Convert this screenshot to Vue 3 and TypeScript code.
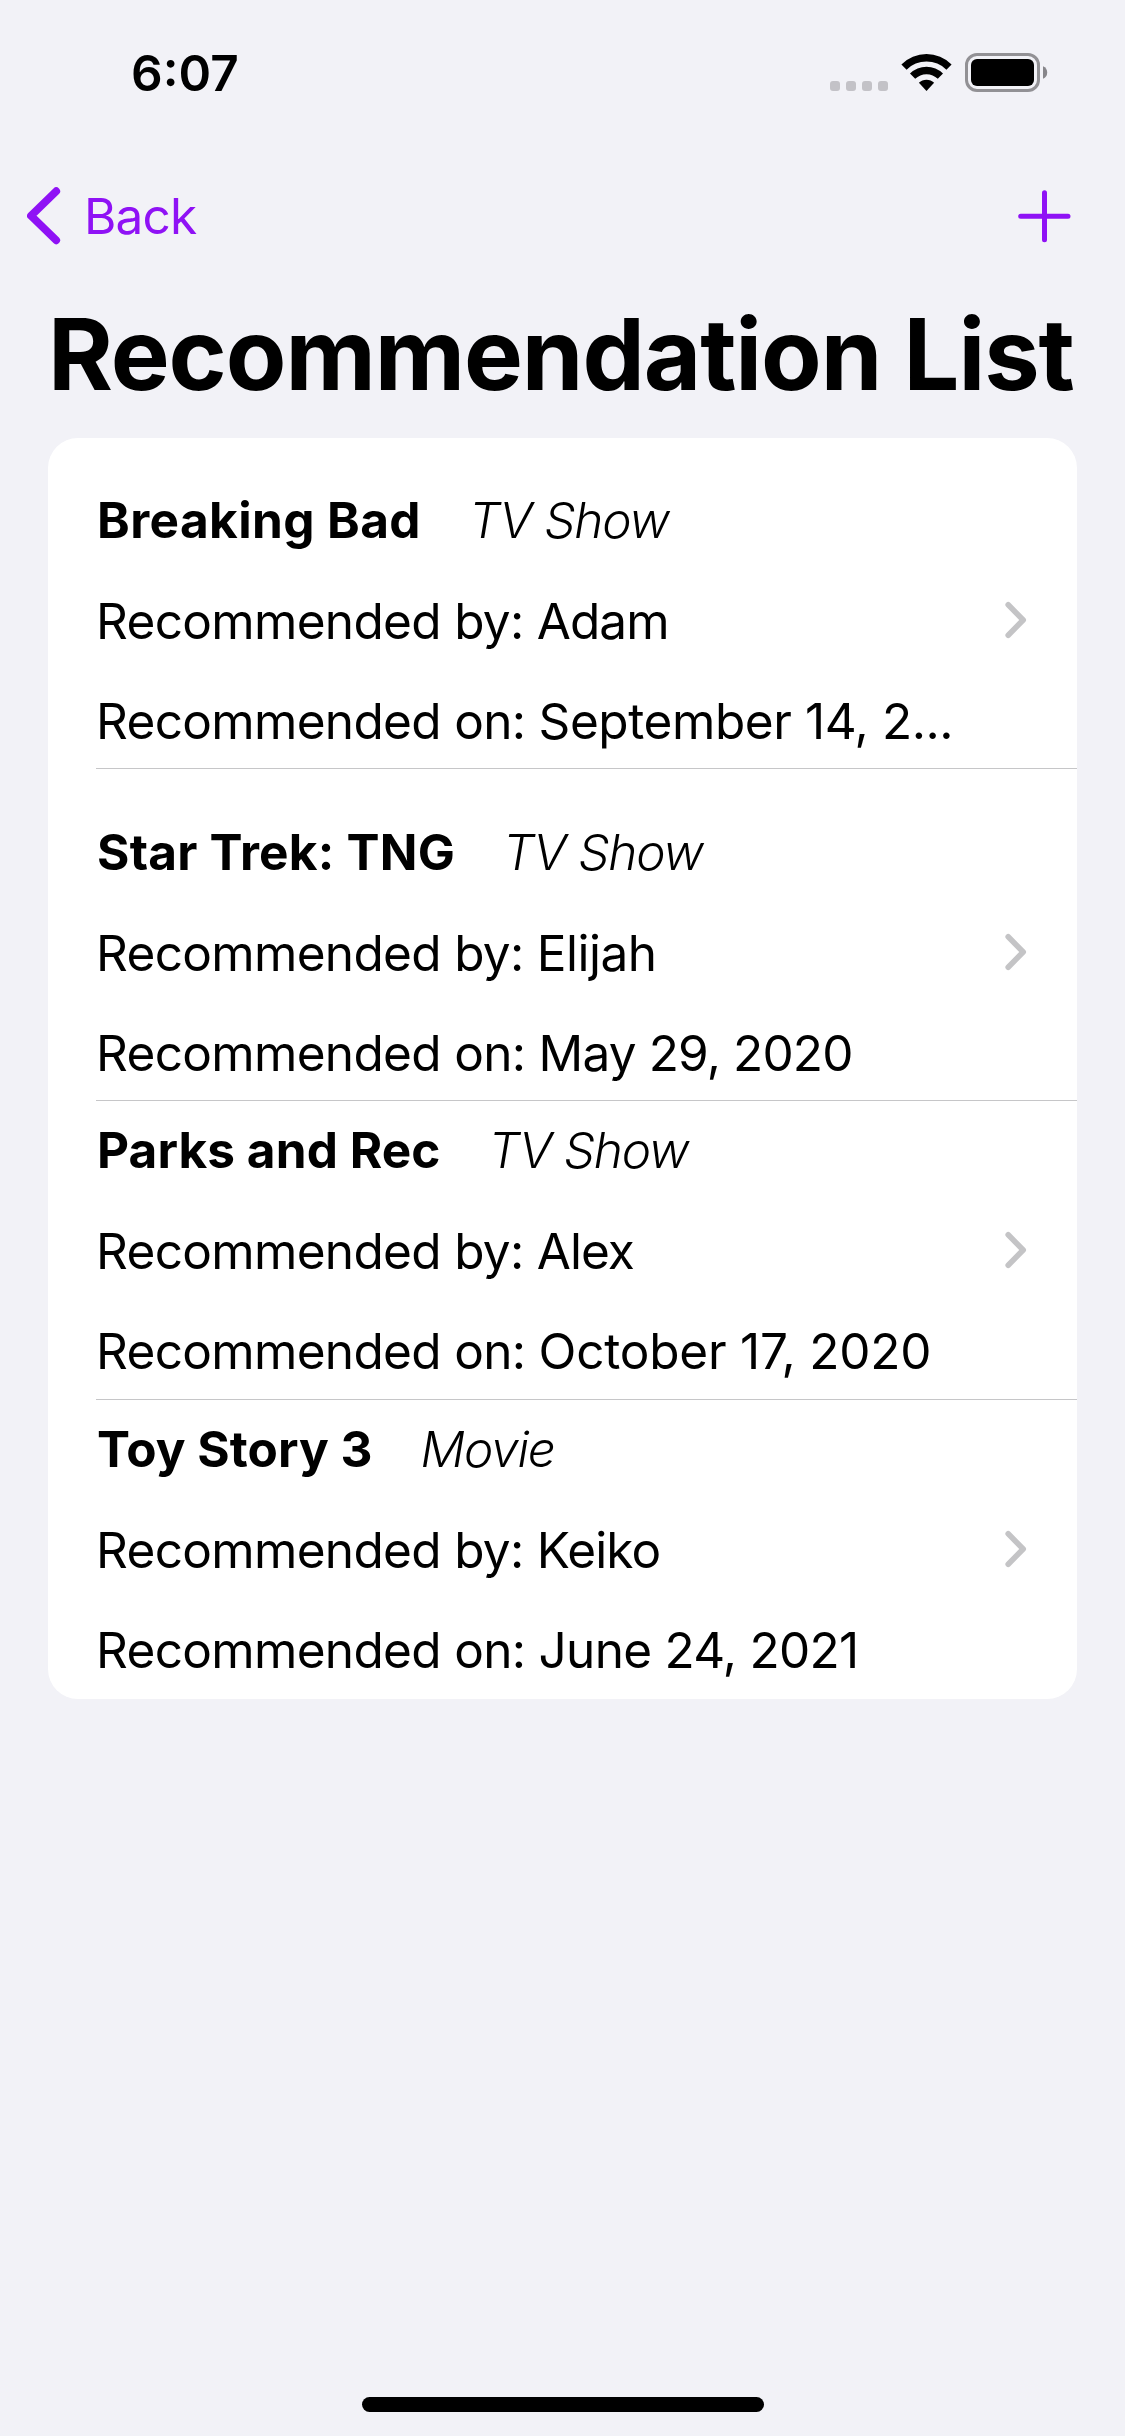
<script setup lang="ts">
interface Recommendation {
  title: string
  kind: string
  by: string
  on: string
  topInset: number
  bottomInset: number
  // letter-spacing in px for each run of text
  titleTracking: number
  kindTracking: number
  byTracking: number
  onTracking: number
}

const items: Recommendation[] = [
  { title: 'Breaking Bad', kind: 'TV Show', by: 'Adam', on: 'September 14, 2...', topInset: 52, bottomInset: 17, titleTracking: 0.41, kindTracking: -1.2, byTracking: -0.95, onTracking: -0.42 },
  { title: 'Star Trek: TNG', kind: 'TV Show', by: 'Elijah', on: 'May 29, 2020', topInset: 53, bottomInset: 17, titleTracking: 0.22, kindTracking: -1.2, byTracking: -0.5, onTracking: -0.85 },
  { title: 'Parks and Rec', kind: 'TV Show', by: 'Alex', on: 'October 17, 2020', topInset: 19, bottomInset: 18, titleTracking: 0.1, kindTracking: -1.2, byTracking: -1, onTracking: -0.22 },
  { title: 'Toy Story 3', kind: 'Movie', by: 'Keiko', on: 'June 24, 2021', topInset: 19, bottomInset: 19, titleTracking: 0.05, kindTracking: -1.2, byTracking: -0.9, onTracking: -0.72 },
]
</script>

<template>
  <div class="screen">
    <header class="status">
      <span class="time">6:07</span>
      <div class="indicators">
        <div class="cellular"><i></i><i></i><i></i><i></i></div>
        <svg class="wifi" width="52" height="40" viewBox="900 53 52 40">
          <path d="M901.4 64.5A35.5 35.5 0 0 1 951.6 64.5L946.4 69.7A28.2 28.2 0 0 0 906.6 69.7Z" />
          <path d="M910 73.6A23.4 23.4 0 0 1 943 73.6L937.8 78.8A16 16 0 0 0 915.2 78.8Z" />
          <path d="M918.9 82.8A10.8 10.8 0 0 1 934.1 82.8L926.5 90.9Z" />
        </svg>
        <svg class="battery" width="84" height="40" viewBox="964 52 84 40">
          <rect x="966.5" y="54.5" width="72" height="36" rx="10.5" fill="none" stroke="#929195" stroke-width="3" />
          <rect x="971" y="59" width="63" height="27" rx="6" />
          <path d="M1043 66.2Q1047.2 68 1047.2 72.5T1043 78.8Z" fill="#87868a" />
        </svg>
      </div>
    </header>

    <nav class="nav">
      <button class="back">
        <svg width="34" height="58" viewBox="0 0 34 58">
          <path d="M29.2 4.2L4 28.8L29.2 53.3" />
        </svg>
        <span>Back</span>
      </button>
      <button class="add">
        <svg width="53" height="53" viewBox="0 0 53 53">
          <path d="M26.5 2.7V49.7M2.7 26.2H50" />
        </svg>
      </button>
    </nav>

    <h1 class="heading">Recommendation List</h1>

    <ul class="card">
      <li
        v-for="item in items"
        :key="item.title"
        class="row"
        :style="{ paddingTop: item.topInset + 'px', paddingBottom: item.bottomInset + 'px' }"
      >
        <div class="details">
          <div class="line first">
            <strong :style="{ letterSpacing: item.titleTracking + 'px' }">{{ item.title }}</strong>
            <em :style="{ letterSpacing: item.kindTracking + 'px' }">{{ item.kind }}</em>
          </div>
          <div class="line second">Recommended by: <span :style="{ letterSpacing: item.byTracking + 'px' }">{{ item.by }}</span></div>
          <div class="line">Recommended on: <span :style="{ letterSpacing: item.onTracking + 'px' }">{{ item.on }}</span></div>
        </div>
        <svg class="chevron" width="22" height="38" viewBox="0 0 22 38">
          <path d="M3.2 3.8L18.2 19L3.2 34.2" />
        </svg>
      </li>
    </ul>

    <div class="home"></div>
  </div>
</template>

<style>
body {
  margin: 0;
  background: #f2f2f7;
}
</style>

<style scoped>
.screen {
  box-sizing: border-box;
  display: flex;
  flex-direction: column;
  width: 1125px;
  height: 2436px;
  padding-bottom: 24px;
  overflow: hidden;
  background: #f2f2f7;
  color: #000;
  font-family: Inter, "Liberation Sans", sans-serif;
  font-size: 49.5px;
  line-height: 60px;
}
.status {
  display: flex;
  justify-content: space-between;
  align-items: flex-start;
  box-sizing: border-box;
  height: 150px;
  padding: 43px 77px 0 131px;
}
.time {
  font-weight: 600;
}
.indicators {
  display: flex;
  padding-top: 9px;
}
.cellular {
  display: flex;
  gap: 6px;
  margin: 29px 12px 0 0;
}
.cellular i {
  width: 10px;
  height: 10px;
  border-radius: 3px;
  background: #c3c2c7;
}
.wifi {
  margin: 1px 12px 0 0;
}
.nav {
  display: flex;
  align-items: center;
  justify-content: space-between;
  height: 132px;
  padding: 0 54px 0 27px;
}
.back,
.add {
  display: flex;
  align-items: center;
  padding: 0;
  border: 0;
  background: none;
  color: #8f12f5;
  font: inherit;
}
.back {
  gap: 23px;
  letter-spacing: -0.8px;
}
.back path {
  fill: none;
  stroke: currentColor;
  stroke-width: 7.8;
  stroke-linecap: round;
  stroke-linejoin: round;
}
.add path {
  fill: none;
  stroke: currentColor;
  stroke-width: 5;
  stroke-linecap: round;
}
.heading {
  margin: 12px 0 24px 48px;
  font-size: 99px;
  font-weight: 700;
  line-height: 120px;
  letter-spacing: -1.08px;
  white-space: nowrap;
}
.card {
  margin: 0 48px;
  padding: 0 0 0 48px;
  list-style: none;
  border-radius: 30px;
  background: #fff;
}
.row {
  display: flex;
  align-items: center;
  justify-content: space-between;
  padding-right: 50px;
  border-bottom: 1px solid #c6c6c8;
}
.row:last-child {
  border-bottom: 0;
}
.line {
  white-space: nowrap;
  letter-spacing: -0.67px;
}
.first {
  display: flex;
  gap: 48px;
  margin-bottom: 41px;
}
.second {
  margin-bottom: 40px;
}
strong {
  margin-left: 1px;
  font-weight: 700;
}
em {
  font-style: italic;
  font-weight: 300;
}
.chevron {
  margin-bottom: 2px;
}
.chevron path {
  fill: none;
  stroke: #c4c4c6;
  stroke-width: 5.6;
  stroke-linecap: round;
  stroke-linejoin: round;
}
.home {
  width: 402px;
  height: 15px;
  margin: auto auto 0;
  border-radius: 8px;
  background: #000;
}
</style>
